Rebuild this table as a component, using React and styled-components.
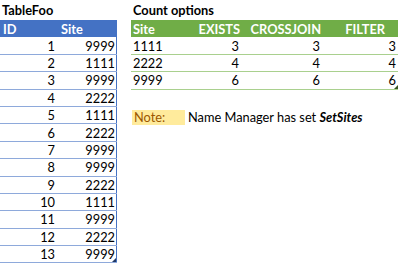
import React from "react";
import styled, { createGlobalStyle } from "styled-components";

const GlobalStyle = createGlobalStyle`
  body {
    margin: 0;
    background: #fff;
    font-family: Lato, "Liberation Sans", sans-serif;
    font-size: 12.8px;
    color: #000;
  }
`;

const ROW_H = 17.4;

const fooRows = [
  [1, 9999], [2, 1111], [3, 9999], [4, 2222], [5, 1111], [6, 2222], [7, 9999],
  [8, 9999], [9, 2222], [10, 1111], [11, 9999], [12, 2222], [13, 9999],
];

const countRows = [
  ["1111", 3, 3, 3],
  ["2222", 4, 4, 4],
  ["9999", 6, 6, 6],
];

const countCols = [
  { label: "Site", width: 66, align: "left", head: 2, pad: 2 },
  { label: "EXISTS", width: 46, align: "right", head: 3, pad: 4 },
  { label: "CROSSJOIN", width: 82, align: "right", head: 4, pad: 5 },
  { label: "FILTER", width: 73, align: "right", head: 13, pad: 2 },
];

const Sheet = styled.div`
  display: flex;
  gap: 14px;
  align-items: flex-start;
`;

const Block = styled.div`
  display: flex;
  flex-direction: column;
  width: ${(p) => p.$width}px;
`;

const Title = styled.div`
  height: 18px;
  padding: 2px 0 0 2px;
  font-weight: 700;
  line-height: 17px;
`;

const Table = styled.div`
  position: relative;
  display: grid;
  grid-template-columns: ${(p) => p.$cols};
  grid-auto-rows: ${ROW_H}px;
  border-right: ${(p) => (p.$edge ? `1px solid ${p.$edge}` : "none")};
`;

const Head = styled.div`
  background: ${(p) => p.$bg};
  color: #fff;
  font-weight: 700;
  display: flex;
  align-items: center;
  justify-content: ${(p) => (p.$align === "right" ? "flex-end" : "flex-start")};
  padding: 0 ${(p) => p.$pad}px;
`;

const Cell = styled.div`
  display: flex;
  align-items: center;
  justify-content: ${(p) => (p.$align === "right" ? "flex-end" : "flex-start")};
  padding: 0 ${(p) => p.$pad}px;
  border-bottom: 1px solid ${(p) => p.$line};
`;

// the little resize corner Excel puts on a table
const Corner = styled.div`
  position: absolute;
  right: 0;
  bottom: 1px;
  width: 0;
  height: 0;
  border-left: 4px solid transparent;
  border-bottom: 4px solid ${(p) => p.$color};
`;

const NoteRow = styled.div`
  display: flex;
  align-items: center;
  margin-top: 20px;
  margin-left: 1px;
  height: 15px;
`;

const NoteTag = styled.span`
  width: 53px;
  height: 15px;
  line-height: 15px;
  padding-left: 2px;
  box-sizing: border-box;
  background: #ffeb9c;
  color: #9c5700;
`;

const NoteText = styled.span`
  margin-left: 3px;
  b {
    font-style: italic;
  }
`;

export default function App() {
  return (
    <>
      <GlobalStyle />
      <Sheet>
        <Block $width={117}>
          <Title>TableFoo</Title>
          <Table $cols="58px 59px" $edge="#4472c4">
            <Head $bg="#4472c4" $pad={3}>ID</Head>
            <Head $bg="#4472c4" $pad={3}>Site</Head>
            {fooRows.map(([id, site]) => (
              <React.Fragment key={id}>
                <Cell $align="right" $pad={3} $line="#8ea9db">{id}</Cell>
                <Cell $align="right" $pad={2} $line="#8ea9db">{site}</Cell>
              </React.Fragment>
            ))}
            <Corner $color="#203864" />
          </Table>
        </Block>

        <Block $width={267}>
          <Title>Count options</Title>
          <Table $cols={countCols.map((c) => `${c.width}px`).join(" ")}>
            {countCols.map((c) => (
              <Head key={c.label} $bg="#70ad47" $align={c.align} $pad={c.head}>
                {c.label}
              </Head>
            ))}
            {countRows.map((row) =>
              row.map((v, i) => (
                <Cell
                  key={`${row[0]}-${i}`}
                  $align={countCols[i].align}
                  $pad={countCols[i].pad}
                  $line="#a9d08e"
                >
                  {v}
                </Cell>
              ))
            )}
            <Corner $color="#375623" />
          </Table>
          <NoteRow>
            <NoteTag>Note:</NoteTag>
            <NoteText>
              Name Manager has set <b>SetSites</b>
            </NoteText>
          </NoteRow>
        </Block>
      </Sheet>
    </>
  );
}
